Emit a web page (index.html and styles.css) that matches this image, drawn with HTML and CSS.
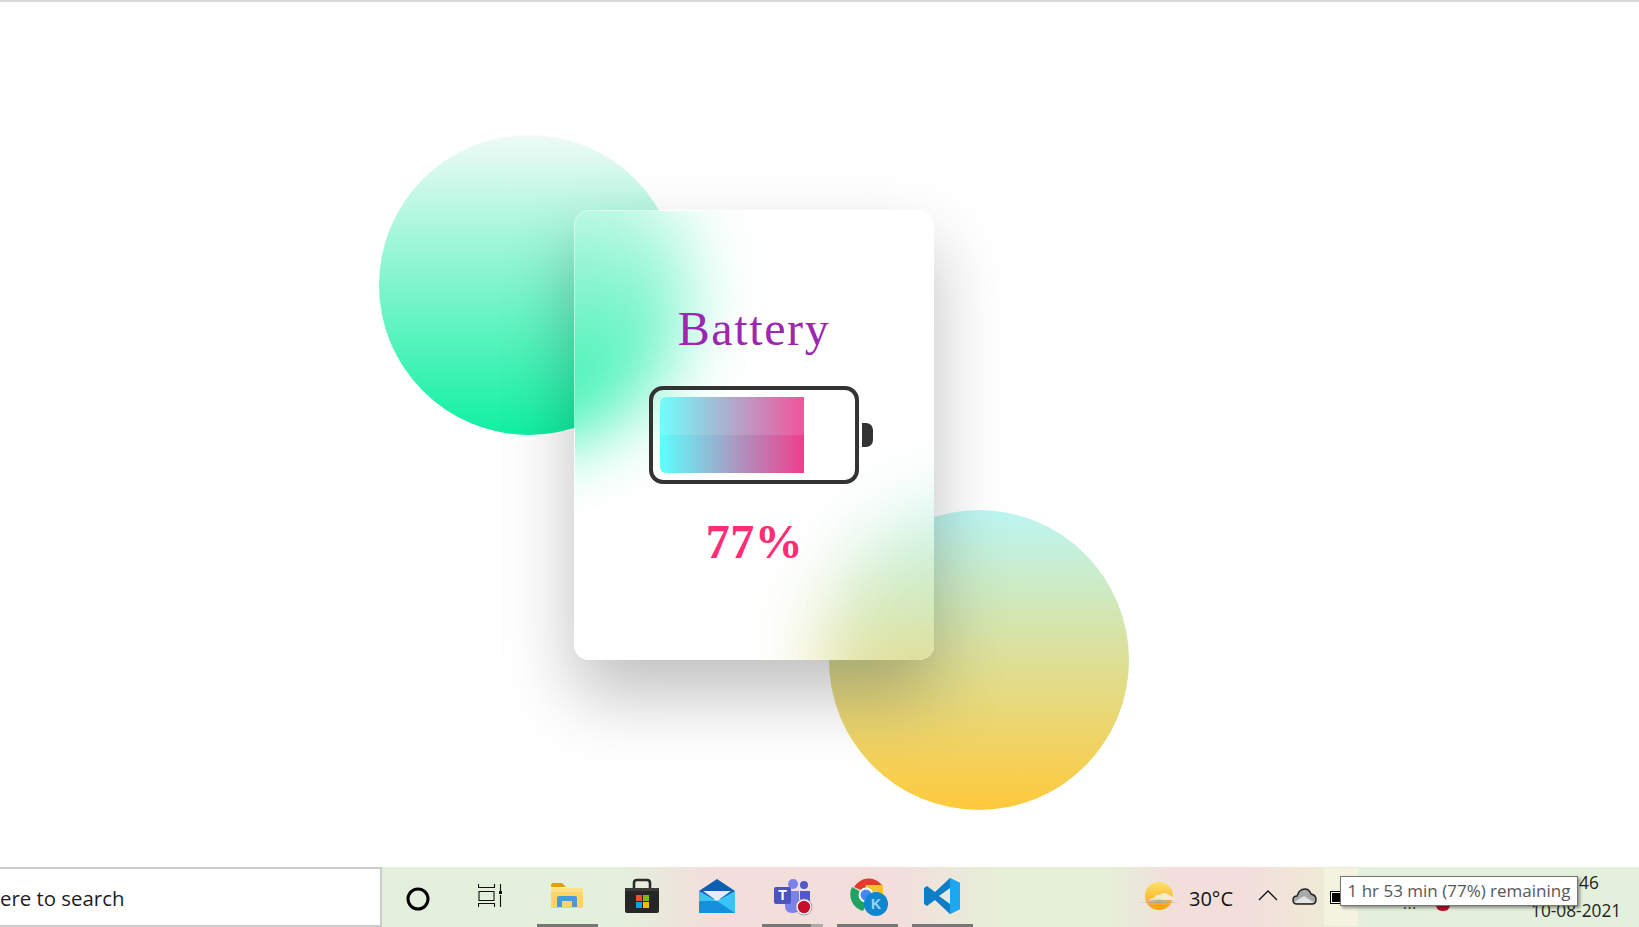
FILE: index.html
```html
<!DOCTYPE html>
<html lang="en">
<head>
<meta charset="utf-8">
<title>Battery</title>
<link rel="stylesheet" href="styles.css">
</head>
<body>
<main class="stage">
  <div class="scene">
    <div class="orb orb-green"></div>
    <div class="orb orb-amber"></div>
    <section class="card">
      <div class="glass">
        <div class="orb orb-green glow-green"></div>
        <div class="orb orb-amber glow-amber"></div>
      </div>
      <h1 class="title">Battery</h1>
      <div class="battery">
        <div class="cell">
          <div class="level" style="width:77%"></div>
        </div>
        <div class="cap"></div>
      </div>
      <p class="percent">77%</p>
    </section>
  </div>
</main>
<footer class="taskbar">
  <div class="search">ere to search</div>
  <div class="assist">
    <svg class="cortana" width="24" height="24" viewBox="0 0 24 24"><circle cx="12" cy="12" r="10" fill="none" stroke="#000" stroke-width="3"/></svg>
    <svg class="taskview" width="24" height="24" viewBox="0 0 24 24" fill="none" stroke="#111" stroke-width="1.100">
      <path d="M.5 0V3.500H16.500V0M1 7.500H16V16.500H1ZM.5 23V19.500H16.500V23M22.500 0V7M22.500 11V23"/><rect x="21" y="7" width="3" height="3" fill="#111" stroke="none"/>
    </svg>
  </div>
  <div class="apps">
    <div class="app running">
      <svg width="34" height="28" viewBox="0 0 34 28">
        <path d="M1 4Q1 1 3 1H12L16 5H1Z" fill="#e2a100"/>
        <path d="M1 6H31Q33 6 33 8V24Q33 26 31 26H3Q1 26 1 24Z" fill="#fcd566"/>
        <path d="M1 6H31Q33 6 33 8V10H1Z" fill="#fde08a"/>
        <path d="M7 25V16Q7 14 9 14H25Q27 14 27 16V25H22V19H12V25Z" fill="#4a9ad8"/>
      </svg>
    </div>
    <div class="app">
      <svg width="36" height="36" viewBox="0 0 36 36">
        <path d="M10 11V5Q10 2 13 2H23Q26 2 26 5V11" fill="none" stroke="#2a2a2a" stroke-width="2.600"/>
        <path d="M1 10H35V33Q35 35 33 35H3Q1 35 1 33Z" fill="#262626"/>
        <rect x="1" y="10" width="34" height="3" fill="#3b3b3b"/>
        <rect x="12" y="17" width="6" height="6" fill="#f25022"/><rect x="19" y="17" width="6" height="6" fill="#7fba00"/>
        <rect x="12" y="24" width="6" height="6" fill="#00a4ef"/><rect x="19" y="24" width="6" height="6" fill="#ffb900"/>
      </svg>
    </div>
    <div class="app">
      <svg width="36" height="34" viewBox="0 0 36 34">
        <path d="M0 12L18 0L36 12V20H0Z" fill="#0a5fb0"/>
        <path d="M4 12H32L18 22Z" fill="#e8edf2"/>
        <path d="M0 12L18 22L36 12V34H0Z" fill="#38c4f5"/>
        <path d="M0 34V22L18 22L36 34Z" fill="#1490dc"/>
      </svg>
    </div>
    <div class="app running split wide">
      <svg width="40" height="38" viewBox="0 0 40 38">
        <circle cx="19" cy="6" r="5" fill="#7b83eb"/><circle cx="30" cy="7" r="4" fill="#5059c9"/>
        <path d="M11 13H25V30Q25 35 18 35Q11 35 11 28Z" fill="#7b83eb"/>
        <path d="M26 13H36V25Q36 30 30 30H26Z" fill="#5059c9"/>
        <rect x="0" y="9" width="17" height="17" rx="2" fill="#4b53bc"/>
        <text class="teams-t" x="8.500" y="22">T</text>
        <circle cx="30" cy="29" r="8" fill="#fff" stroke="#a0a0a0"/><circle cx="30" cy="29" r="6.200" fill="#c50f2e"/>
      </svg>
    </div>
    <div class="app running wide">
      <svg width="40" height="40" viewBox="0 0 40 40">
        <path d="M16 15L5 10A17 17 0 0 1 33 8L17 8Z" fill="#e33b2e"/>
        <path d="M3 10A17 17 0 0 0 14 34L21 20Z" fill="#1ea362"/>
        <path d="M16 8H34L34 24L22 14Z" fill="#fbc02d"/>
        <circle cx="17" cy="18" r="7.500" fill="#fff"/><circle cx="17" cy="18" r="5.500" fill="#4587f3"/>
        <circle cx="27" cy="27" r="12" fill="#0f86cd"/>
        <text class="chrome-k" x="27" y="32">K</text>
      </svg>
    </div>
    <div class="app running">
      <svg width="38" height="38" viewBox="0 0 38 38">
        <path d="M27 1L37 6V32L27 37L12 23L4 29L1 27V11L4 9L12 15ZM27 11L16 19L27 27Z" fill="#0e7fc6"/>
        <path d="M27 1L37 6V32L27 37Z" fill="#1ca7ee"/>
      </svg>
    </div>
  </div>
  <div class="tray">
    <svg class="weather" width="38" height="30" viewBox="0 0 38 30">
      <defs>
        <linearGradient id="sun" x1="0" y1="0" x2="0" y2="1"><stop offset="0" stop-color="#fde26a"/><stop offset="1" stop-color="#fb9f0e"/></linearGradient>
        <linearGradient id="mist" x1="0" y1="0" x2="1" y2="0"><stop offset="0" stop-color="#bdb19f" stop-opacity=".2"/><stop offset=".5" stop-color="#a89a86"/><stop offset="1" stop-color="#bdb19f" stop-opacity=".2"/></linearGradient>
      </defs>
      <circle cx="19" cy="15" r="14" fill="url(#sun)"/>
      <path d="M13 19Q15 13 20 14Q24 10 29 14Q33 15 34 19Z" fill="#f6ead2"/>
      <path d="M8 20Q11 16 15 17Q20 15 24 20Z" fill="#efe0c6"/>
      <path d="M0 21H38V22H0Z" fill="url(#mist)"/>
      <path d="M5 19H33V20H5ZM8 24H30V25H8Z" fill="url(#mist)"/>
    </svg>
    <span class="temp">30°C</span>
    <svg class="chevron" width="20" height="11" viewBox="0 0 20 11"><path d="M1 10L10 1L19 10" fill="none" stroke="#111" stroke-width="1.300"/></svg>
    <svg class="cloud" width="25" height="18" viewBox="0 0 25 18"><path d="M5 17Q1 17 1 13Q1 9 5 9Q7 2 13 2Q17 2 19 7Q24 8 24 12.500Q24 17 20 17Z" fill="#a8a8a8" stroke="#222" stroke-width="1.500"/><path d="M2.500 15L12 9L22 15.500Q21 16 20 16H5Q3 16 2.500 15Z" fill="#e4e4e4"/></svg>
    <div class="tray-hover"><span class="power"></span></div>
    <span class="tray-dots">...</span>
    <span class="tray-dot"></span>
    <div class="clock">
      <span class="time">46</span>
      <span class="date">10-08-2021</span>
    </div>
  </div>
  <div class="tooltip">1 hr 53 min (77%) remaining</div>
</footer>
</body>
</html>
```
FILE: styles.css
```css
* { box-sizing: border-box; }
html, body { margin: 0; height: 100%; }
body {
  width: 1639px;
  height: 927px;
  overflow: hidden;
  background: #fff;
  border-top: 2px solid #d9d9d9;
  display: flex;
  flex-direction: column;
  font-family: "Open Sans", "Noto Sans", sans-serif;
}
.stage {
  flex: 1;
  padding: 208px 0 0 574px;
}
.scene {
  position: relative;
  width: 360px;
  height: 450px;
}
.orb {
  position: absolute;
  width: 300px;
  height: 300px;
  border-radius: 50%;
}
.orb-green {
  left: -195px;
  top: -75px;
  background: linear-gradient(#effaf7, #0ff0a2);
}
.orb-amber {
  left: 255px;
  top: 300px;
  background: linear-gradient(#bbf6f3, #ffc93a);
}
.card {
  position: relative;
  width: 360px;
  height: 450px;
  border-radius: 15px;
  border-style: solid;
  border-color: rgba(255, 255, 255, .5);
  border-width: 1px 0 0 1px;
  box-shadow: 0 35px 70px rgba(0, 0, 0, .25);
  display: flex;
  flex-direction: column;
  align-items: center;
  font-family: "Liberation Serif", "Times New Roman", serif;
}
.glass {
  position: absolute;
  inset: 0;
  overflow: hidden;
  border-radius: 14px 15px 15px 14px;
  background: #fff;
}
.glow-green {
  left: -196px;
  top: -76px;
  filter: blur(34px);
  opacity: .92;
  transform: scale(1.06);
}
.glow-amber {
  left: 254px;
  top: 299px;
  filter: blur(34px);
  opacity: .92;
  transform: scale(1.06);
}
.title {
  position: relative;
  margin: 90px 1px 0 0;
  font-size: 48px;
  line-height: 55px;
  font-weight: 400;
  letter-spacing: 1.600px;
  color: #9c27b0;
}
.battery {
  position: relative;
  margin-top: 30px;
  display: flex;
  align-items: center;
  gap: 3px;
  margin-left: 12px;
}
.cell {
  width: 210px;
  height: 98px;
  padding: 7px;
  border: 4px solid #333;
  border-radius: 14px;
}
.level {
  position: relative;
  height: 100%;
  overflow: hidden;
  border-radius: 6px 0 0 6px;
  background: linear-gradient(90deg, #5dfffd, #f03d8d);
}
.level::after {
  content: "";
  position: absolute;
  left: 0;
  right: 0;
  top: 0;
  height: 50%;
  background: rgba(255, 255, 255, .12);
}
.cap {
  width: 11px;
  height: 24px;
  background: #333;
  border-radius: 0 7px 7px 0;
}
.percent {
  position: relative;
  margin: 30px 0 0;
  font-size: 48px;
  line-height: 55px;
  font-weight: 700;
  letter-spacing: .5px;
  color: #ff2d75;
}

.taskbar {
  position: relative;
  height: 60px;
  flex: none;
  display: flex;
  background: linear-gradient(90deg, #e3f0dc 0, #e3f0dc 620px, #f2dfdc 710px, #f2dfdc 900px, #e6efd8 1000px, #e6efd8 1110px, #f2dfdc 1170px, #f2dfdc 1250px, #f0e8d6 1310px, #e3f0dc 1370px, #e3f0dc 100%);
}
.search {
  width: 382px;
  height: 60px;
  flex: none;
  background: #fff;
  border: 2px solid #ccc;
  border-left: 0;
  font-size: 20.400px;
  line-height: 58px;
  color: #1c1c1c;
}
.assist {
  width: 155px;
  flex: none;
  display: flex;
  align-items: center;
}
.cortana { margin: 0 0 -3px 24px; }
.taskview { margin: -2px 0 0 48px; }
.apps {
  display: flex;
  gap: 14px;
  height: 60px;
}
.app {
  width: 61px;
  height: 60px;
  display: flex;
  align-items: center;
  justify-content: center;
  padding: 1px 2px 0 0;
  border-bottom: 3px solid transparent;
}
.wide { padding: 2px 0 0 2px; }
.running { border-bottom-color: #777; }
.split { border-image: linear-gradient(90deg, #777 80%, #aaa 80%) 1; }
.teams-t {
  font: 700 14px "Liberation Sans", sans-serif;
  fill: #fff;
  text-anchor: middle;
}
.chrome-k {
  font: 700 14px "Liberation Sans", sans-serif;
  fill: #9fd6f5;
  text-anchor: middle;
}
.tray {
  flex: 1;
  position: relative;
  display: flex;
  align-items: center;
  padding-left: 167px;
  min-width: 0;
}
.weather { flex: none; margin-top: -2px; }
.temp {
  margin-left: 11px;
  font-size: 20px;
  color: #111;
  padding-top: 3px;
}
.chevron { flex: none; margin: 0 0 4px 25px; }
.cloud { flex: none; margin: 0 0 2px 14px; }
.tray-hover {
  flex: none;
  width: 34px;
  height: 58px;
  margin-left: 7px;
  background: #f3f3e0;
  display: flex;
  align-items: center;
  padding-left: 6px;
}
.power {
  width: 13px;
  height: 13px;
  background: #000;
  border: 1px solid #000;
  outline: 1px solid #fff;
  outline-offset: -2px;
}
.tray-dots {
  position: absolute;
  left: 430px;
  top: 27px;
  font-size: 14px;
  letter-spacing: 1px;
  color: #222;
}
.tray-dot {
  position: absolute;
  left: 463px;
  top: 38px;
  width: 14px;
  height: 6px;
  border-radius: 0 0 7px 7px;
  background: #c50f2e;
}
.clock {
  position: absolute;
  left: 558px;
  top: 0;
  width: 92px;
  display: flex;
  flex-direction: column;
  align-items: flex-start;
  font-size: 17.300px;
  line-height: 28px;
  color: #222;
  white-space: nowrap;
}
.time { margin: 2px 0 0 48px; }
.tooltip {
  position: absolute;
  left: 1340px;
  top: 9px;
  width: 238px;
  height: 30px;
  background: #fff;
  border: 1px solid #767676;
  box-shadow: 2px 2px 3px rgba(0, 0, 0, .4);
  color: #575757;
  font-size: 17px;
  line-height: 28px;
  text-align: center;
  white-space: nowrap;
}
```
